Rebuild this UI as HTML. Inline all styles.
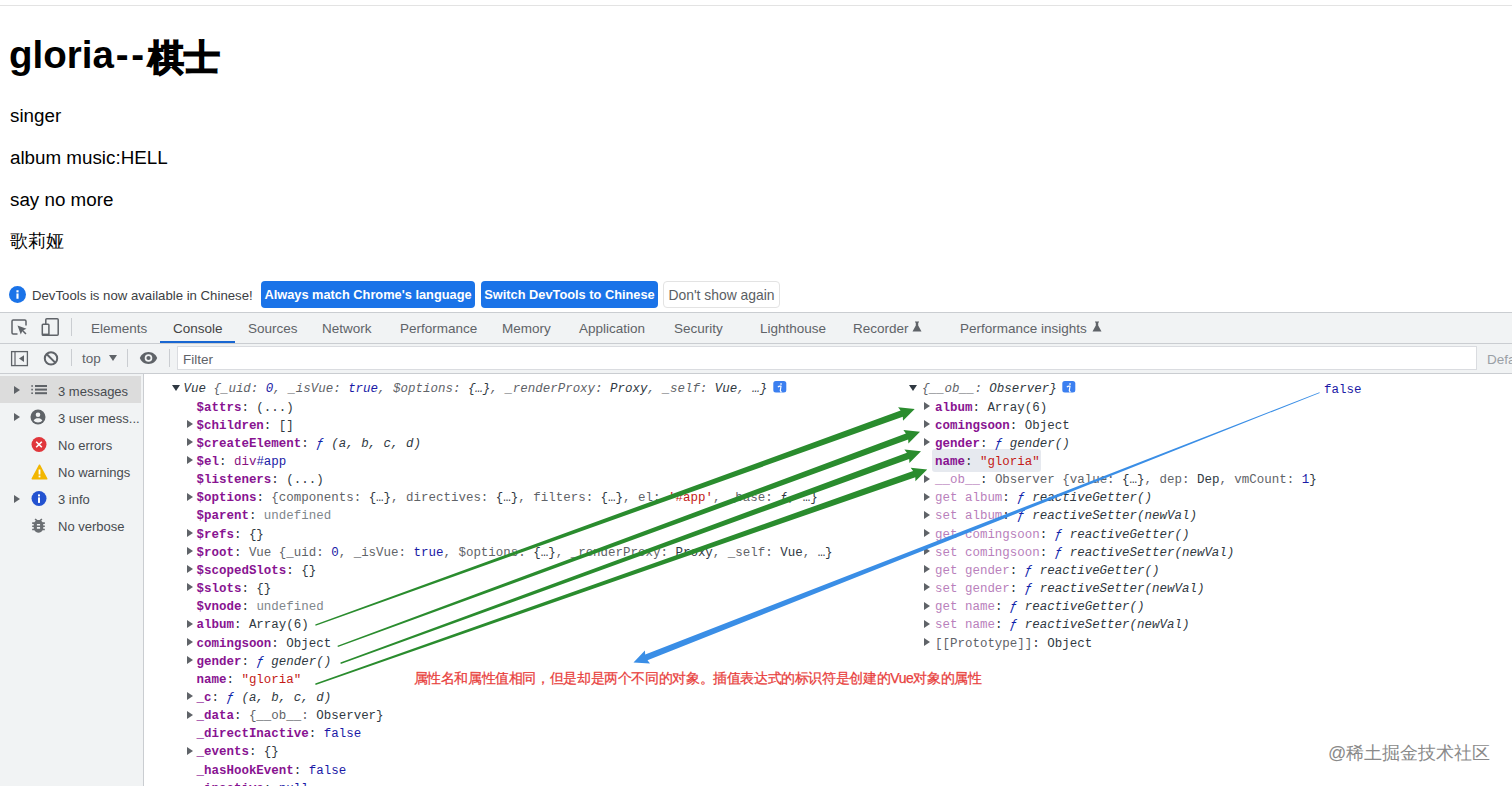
<!DOCTYPE html>
<html><head><meta charset="utf-8">
<style>
*{margin:0;padding:0;box-sizing:border-box}
html,body{width:1512px;height:786px;overflow:hidden;background:#fff;position:relative;font-family:"Liberation Sans",sans-serif}
.a{position:absolute;white-space:nowrap}
#topline{left:0;top:5px;width:1512px;height:1px;background:#e3e3e3}
.pg{color:#000;font-size:18.8px;left:10px}
h1.a{font-size:37px;font-weight:bold;left:9px;color:#000}
/* infobar */
.ib{font-size:13.2px;color:#3c4043}
.btn{position:absolute;top:281px;height:27px;border-radius:4px;font-size:12.8px;line-height:27px;text-align:center;white-space:nowrap}
.bb{background:#1a73e8;color:#fff;font-weight:bold}
.bw{background:#fff;color:#444;border:1px solid #e3e3e3;line-height:25px}
#tabbar{left:0;top:312px;width:1512px;height:32px;background:#f1f3f4;border-top:1px solid #cacdd1;border-bottom:1px solid #cacdd1}
.tab{font-size:13.5px;color:#5f6368;top:320.8px}
#toolbar{left:0;top:344px;width:1512px;height:30px;background:#f1f3f4;border-bottom:1px solid #cacdd1}
#sidebar{left:0;top:374px;width:144px;height:412px;background:#f1f3f4;border-right:1px solid #cacdd1}
.sb{font-size:13px;color:#474b50;left:58px}
.mono{font-family:"Liberation Mono",monospace;font-size:12.47px;line-height:18.15px}
.k{color:#881391;font-weight:bold}
.kd{color:#b97fbc}
.s{color:#c41a16}
.n{color:#1a1aa6}
.g{color:#80868b}
.d{color:#303942}
.it{font-style:italic}
.p{color:#5f6368}
.u{color:#80868b}
.f{color:#0d22aa;font-style:italic}
.tg{color:#881280}
.tri{position:absolute;width:0;height:0;border-top:4px solid transparent;border-bottom:4px solid transparent;border-left:6px solid #5f6368}
.trd{position:absolute;width:0;height:0;border-left:4px solid transparent;border-right:4px solid transparent;border-top:6px solid #303942}
</style></head><body>
<div id="topline" class="a"></div>
<h1 class="a" style="top:33px;font-size:38.5px">gloria<span style="letter-spacing:2.5px;margin-left:2px">--</span></h1>
<div class="a" style="left:148px;top:33.5px;font-size:36px;font-weight:bold;color:#000;-webkit-text-stroke:1.4px #000">棋士</div>
<div class="a pg" style="top:105px">singer</div>
<div class="a pg" style="top:147px">album music:HELL</div>
<div class="a pg" style="top:189px">say no more</div>
<div class="a pg" style="top:229px;font-size:18px">歌莉娅</div>

<!-- infobar -->
<svg class="a" style="left:9px;top:286px" width="17" height="17" viewBox="0 0 16 16"><circle cx="8" cy="8" r="8" fill="#1a73e8"/><rect x="7" y="7" width="2" height="5" fill="#fff"/><rect x="7" y="4" width="2" height="2" fill="#fff"/></svg>
<div class="a ib" style="left:32px;top:287.7px">DevTools is now available in Chinese!</div>
<div class="btn bb" style="left:261px;width:214px">Always match Chrome's language</div>
<div class="btn bb" style="left:481px;width:177px">Switch DevTools to Chinese</div>
<div class="btn bw" style="left:663px;width:117px;font-size:13.9px;line-height:27px;color:#5a5e63">Don't show again</div>

<div id="tabbar" class="a"></div>
<div class="a tab" style="left:91px">Elements</div>
<div class="a tab" style="left:173px;color:#444">Console</div>
<div class="a" style="left:160px;top:341px;width:75px;height:2px;background:#1967d2"></div>
<div class="a tab" style="left:248px">Sources</div>
<div class="a tab" style="left:322px">Network</div>
<div class="a tab" style="left:400px">Performance</div>
<div class="a tab" style="left:502px">Memory</div>
<div class="a tab" style="left:579px">Application</div>
<div class="a tab" style="left:674px">Security</div>
<div class="a tab" style="left:760px">Lighthouse</div>
<div class="a tab" style="left:853px">Recorder</div>
<div class="a tab" style="left:960px">Performance insights</div>

<div id="toolbar" class="a"></div>
<div class="a" style="left:177px;top:346px;width:1300px;height:24px;background:#fff;border:1px solid #dadce0"></div>
<div class="a" style="left:183px;top:352.3px;font-size:13.5px;color:#5f6368">Filter</div>
<div class="a" style="left:1487px;top:352.3px;font-size:13.5px;color:#9aa0a6">Default levels</div>

<div id="sidebar" class="a"></div>

<!-- tab bar icons -->
<svg class="a" style="left:10px;top:318px" width="20" height="20" viewBox="0 0 20 20"><path d="M7.5 16H3.2A1.2 1.2 0 0 1 2 14.8V3.2A1.2 1.2 0 0 1 3.2 2h11.6A1.2 1.2 0 0 1 16 3.2V7.5" fill="none" stroke="#5f6368" stroke-width="1.5"/><path d="M7.5 7.5L16.5 10.8L13.3 12.2L16.5 15.4L15.4 16.5L12.2 13.3L10.8 16.5Z" fill="#5f6368"/></svg>
<svg class="a" style="left:40px;top:317px" width="20" height="20" viewBox="0 0 20 20"><rect x="5.8" y="1.8" width="12.4" height="16.4" rx="1" fill="none" stroke="#5f6368" stroke-width="1.5"/><rect x="2.3" y="7.3" width="6.6" height="10.9" rx="0.8" fill="#f1f3f4" stroke="#5f6368" stroke-width="1.5"/><rect x="2.3" y="16.6" width="6.6" height="1.6" fill="#5f6368"/></svg>
<div class="a" style="left:71px;top:318px;width:1px;height:18px;background:#cacdd1"></div>
<svg class="a" style="left:912px;top:321px" width="10" height="11" viewBox="0 0 10 11"><path d="M3 0.5h4v1h-0.8v3L9.5 10.5h-9L3.8 4.5v-3H3z" fill="#5f6368"/></svg>
<svg class="a" style="left:1092px;top:321px" width="10" height="11" viewBox="0 0 10 11"><path d="M3 0.5h4v1h-0.8v3L9.5 10.5h-9L3.8 4.5v-3H3z" fill="#5f6368"/></svg>
<!-- toolbar icons -->
<svg class="a" style="left:10px;top:350px" width="19" height="17" viewBox="0 0 19 17"><rect x="1.6" y="1.6" width="15.8" height="14" fill="none" stroke="#5f6368" stroke-width="1.3"/><rect x="4.4" y="1.6" width="1.2" height="14" fill="#5f6368"/><path d="M9 8.6L14 5.2V12Z" fill="#5f6368"/></svg>
<svg class="a" style="left:43px;top:350px" width="16" height="16" viewBox="0 0 16 16"><circle cx="8" cy="8.4" r="6.2" fill="none" stroke="#5f6368" stroke-width="2"/><path d="M3.8 4.2L12.2 12.6" stroke="#5f6368" stroke-width="2"/></svg>
<div class="a" style="left:71px;top:349px;width:1px;height:17px;background:#cacdd1"></div>
<div class="a" style="left:82px;top:351.2px;font-size:13.5px;color:#5f6368">top</div>
<div class="trd" style="left:109px;top:355px;border-top-color:#5f6368;border-left-width:4px;border-right-width:4px;border-top-width:6px"></div>
<div class="a" style="left:127px;top:349px;width:1px;height:18px;background:#cacdd1"></div>
<svg class="a" style="left:139px;top:351px" width="19" height="14" viewBox="0 0 19 14"><path d="M9.5 1C5 1 1.9 4 0.8 7C1.9 10 5 13 9.5 13S17.1 10 18.2 7C17.1 4 14 1 9.5 1Z" fill="#5f6368"/><circle cx="9.5" cy="7" r="3.8" fill="#f1f3f4"/><circle cx="9.5" cy="7" r="2.1" fill="#5f6368"/></svg>
<div class="a" style="left:169px;top:349px;width:1px;height:18px;background:#cacdd1"></div>

<!-- sidebar -->
<div class="a" style="left:0;top:376px;width:141px;height:27px;background:#dcdcdc"></div>
<div class="tri" style="left:14px;top:386px;border-left-color:#5f6368"></div>
<svg class="a" style="left:30px;top:384px" width="18" height="11" viewBox="0 0 18 11"><rect x="1.3" y="1.2" width="1.6" height="1.6" fill="#5f6368"/><rect x="1.3" y="4.8" width="1.6" height="1.6" fill="#5f6368"/><rect x="1.3" y="8.4" width="1.6" height="1.6" fill="#5f6368"/><rect x="5" y="1" width="12" height="2" fill="#5f6368"/><rect x="5" y="4.6" width="12" height="2" fill="#5f6368"/><rect x="5" y="8.2" width="12" height="2" fill="#5f6368"/></svg>
<div class="a sb" style="top:383.5px">3 messages</div>
<div class="tri" style="left:14px;top:413px;border-left-color:#5f6368"></div>
<svg class="a" style="left:30px;top:409px" width="16" height="16" viewBox="0 0 16 16"><circle cx="8" cy="8" r="7.5" fill="#5f6368"/><circle cx="8" cy="5.8" r="2.3" fill="#f1f3f4"/><path d="M3.6 11.4C4.6 9.8 6.2 9.2 8 9.2S11.4 9.8 12.4 11.4C11.4 12.7 9.8 13.4 8 13.4S4.6 12.7 3.6 11.4Z" fill="#f1f3f4"/></svg>
<div class="a sb" style="top:410.5px">3 user mess...</div>
<svg class="a" style="left:31px;top:437px" width="16" height="16" viewBox="0 0 16 16"><circle cx="8" cy="7.5" r="7.5" fill="#e0363b"/><path d="M5.2 4.7L10.8 10.3M10.8 4.7L5.2 10.3" stroke="#fff" stroke-width="1.6"/></svg>
<div class="a sb" style="top:437.5px">No errors</div>
<svg class="a" style="left:31px;top:464px" width="17" height="16" viewBox="0 0 17 16"><path d="M8.5 1.2L15.8 14.8H1.2Z" fill="#f2b600" stroke="#f2b600" stroke-width="1.4" stroke-linejoin="round"/><rect x="7.6" y="5.5" width="1.8" height="5" fill="#fff"/><rect x="7.6" y="11.6" width="1.8" height="1.8" fill="#fff"/></svg>
<div class="a sb" style="top:464.5px">No warnings</div>
<div class="tri" style="left:14px;top:495px;border-left-color:#5f6368"></div>
<svg class="a" style="left:31px;top:491px" width="16" height="16" viewBox="0 0 16 16"><circle cx="8" cy="7.5" r="7.5" fill="#2352d0"/><rect x="7" y="6.4" width="2" height="5.5" fill="#fff"/><rect x="7" y="3.4" width="2" height="2" fill="#fff"/></svg>
<div class="a sb" style="top:491.5px">3 info</div>
<svg class="a" style="left:29px;top:516px" width="19" height="19" viewBox="0 0 24 24"><path fill="#6b6f73" d="M20 8h-2.81c-.45-.78-1.07-1.45-1.82-1.96L17 4.41 15.59 3l-2.17 2.17C12.96 5.06 12.49 5 12 5c-.49 0-.96.06-1.41.17L8.41 3 7 4.41l1.62 1.63C7.88 6.550 7.26 7.22 6.81 8H4v2h2.090c-.05.33-.09.66-.09 1v1H4v2h2v1c0 .34.04.67.09 1H4v2h2.81c1.04 1.79 2.970 3 5.19 3s4.15-1.21 5.19-3H20v-2h-2.09c.05-.33.09-.66.09-1v-1h2v-2h-2v-1c0-.34-.04-.67-.09-1H20V8zm-6 8h-4v-2h4v2zm0-4h-4v-2h4v2z"/></svg>
<div class="a sb" style="top:518.5px">No verbose</div>

<!-- info badges -->
<svg class="a" style="left:773px;top:381px" width="14" height="12" viewBox="0 0 14 12"><rect x="0.3" y="0" width="13" height="11.5" rx="2.5" fill="#3b7ff0"/><path d="M7.3 2.2h1.5v1.5H7.3z" fill="#fff"/><path d="M4.9 6.2Q6 4.9 7.3 5.1L8 5.3L7.3 9.6L8.4 11.3" stroke="#fff" stroke-width="1.2" fill="none"/></svg>
<svg class="a" style="left:1062px;top:381px" width="14" height="12" viewBox="0 0 14 12"><rect x="0.3" y="0" width="13" height="11.5" rx="2.5" fill="#3b7ff0"/><path d="M7.3 2.2h1.5v1.5H7.3z" fill="#fff"/><path d="M4.9 6.2Q6 4.9 7.3 5.1L8 5.3L7.3 9.6L8.4 11.3" stroke="#fff" stroke-width="1.2" fill="none"/></svg>
<!-- name highlight -->
<div class="a" style="left:932px;top:449px;width:109px;height:23px;background:#e6e9ef;border-radius:3px"></div>
<div class="a mono" style="left:1324px;top:381px"><span class="n">false</span></div>
<div class="a mono" style="left:183.5px;top:380.43px"><span class="it d">Vue </span><span class="it p">{_uid: </span><span class="it n">0</span><span class="it p">, _isVue: </span><span class="it n">true</span><span class="it p">, $options: </span><span class="it d">{…}</span><span class="it p">, _renderProxy: </span><span class="it d">Proxy</span><span class="it p">, _self: </span><span class="it d">Vue</span><span class="it p">, </span><span class="it d">…}</span></div>
<div class="trd" style="left:172.2px;top:385.00px"></div>
<div class="a mono" style="left:196.5px;top:398.57px"><span class="k">$attrs</span><span class="d">: (...)</span></div>
<div class="a mono" style="left:196.5px;top:416.73px"><span class="k">$children</span><span class="d">: []</span></div>
<div class="tri" style="left:186.5px;top:420.10px"></div>
<div class="a mono" style="left:196.5px;top:434.88px"><span class="k">$createElement</span><span class="d">: </span><span class="f">ƒ</span><span class="it d"> (a, b, c, d)</span></div>
<div class="tri" style="left:186.5px;top:438.25px"></div>
<div class="a mono" style="left:196.5px;top:453.03px"><span class="k">$el</span><span class="d">: </span><span class="tg">div</span><span class="n">#app</span></div>
<div class="tri" style="left:186.5px;top:456.40px"></div>
<div class="a mono" style="left:196.5px;top:471.18px"><span class="k">$listeners</span><span class="d">: (...)</span></div>
<div class="a mono" style="left:196.5px;top:489.32px"><span class="k">$options</span><span class="d">: </span><span class="p">{components: </span><span class="d">{…}</span><span class="p">, directives: </span><span class="d">{…}</span><span class="p">, filters: </span><span class="d">{…}</span><span class="p">, el: </span><span class="s">'#app'</span><span class="p">, _base: </span><span class="d">ƒ, …}</span></div>
<div class="tri" style="left:186.5px;top:492.70px"></div>
<div class="a mono" style="left:196.5px;top:507.47px"><span class="k">$parent</span><span class="d">: </span><span class="u">undefined</span></div>
<div class="a mono" style="left:196.5px;top:525.62px"><span class="k">$refs</span><span class="d">: {}</span></div>
<div class="tri" style="left:186.5px;top:529.00px"></div>
<div class="a mono" style="left:196.5px;top:543.77px"><span class="k">$root</span><span class="d">: </span><span class="p">Vue {_uid: </span><span class="n">0</span><span class="p">, _isVue: </span><span class="n">true</span><span class="p">, $options: </span><span class="d">{…}</span><span class="p">, _renderProxy: </span><span class="d">Proxy</span><span class="p">, _self: </span><span class="d">Vue</span><span class="p">, </span><span class="d">…}</span></div>
<div class="tri" style="left:186.5px;top:547.15px"></div>
<div class="a mono" style="left:196.5px;top:561.92px"><span class="k">$scopedSlots</span><span class="d">: {}</span></div>
<div class="tri" style="left:186.5px;top:565.30px"></div>
<div class="a mono" style="left:196.5px;top:580.07px"><span class="k">$slots</span><span class="d">: {}</span></div>
<div class="tri" style="left:186.5px;top:583.45px"></div>
<div class="a mono" style="left:196.5px;top:598.22px"><span class="k">$vnode</span><span class="d">: </span><span class="u">undefined</span></div>
<div class="a mono" style="left:196.5px;top:616.38px"><span class="k">album</span><span class="d">: Array(6)</span></div>
<div class="tri" style="left:186.5px;top:619.75px"></div>
<div class="a mono" style="left:196.5px;top:634.52px"><span class="k">comingsoon</span><span class="d">: Object</span></div>
<div class="tri" style="left:186.5px;top:637.90px"></div>
<div class="a mono" style="left:196.5px;top:652.67px"><span class="k">gender</span><span class="d">: </span><span class="f">ƒ</span><span class="it d"> gender()</span></div>
<div class="tri" style="left:186.5px;top:656.05px"></div>
<div class="a mono" style="left:196.5px;top:670.82px"><span class="k">name</span><span class="d">: </span><span class="s">"gloria"</span></div>
<div class="a mono" style="left:196.5px;top:688.97px"><span class="k">_c</span><span class="d">: </span><span class="f">ƒ</span><span class="it d"> (a, b, c, d)</span></div>
<div class="tri" style="left:186.5px;top:692.35px"></div>
<div class="a mono" style="left:196.5px;top:707.12px"><span class="k">_data</span><span class="d">: </span><span class="p">{__ob__: </span><span class="d">Observer}</span></div>
<div class="tri" style="left:186.5px;top:710.50px"></div>
<div class="a mono" style="left:196.5px;top:725.27px"><span class="k">_directInactive</span><span class="d">: </span><span class="n">false</span></div>
<div class="a mono" style="left:196.5px;top:743.42px"><span class="k">_events</span><span class="d">: {}</span></div>
<div class="tri" style="left:186.5px;top:746.80px"></div>
<div class="a mono" style="left:196.5px;top:761.57px"><span class="k">_hasHookEvent</span><span class="d">: </span><span class="n">false</span></div>
<div class="a mono" style="left:196.5px;top:779.72px"><span class="k">_inactive</span><span class="d">: </span><span class="n">null</span></div>
<div class="a mono" style="left:922px;top:380.43px"><span class="it p">{__ob__: </span><span class="it d">Observer}</span></div>
<div class="trd" style="left:909.3px;top:385.00px"></div>
<div class="a mono" style="left:935px;top:398.57px"><span class="k">album</span><span class="d">: Array(6)</span></div>
<div class="tri" style="left:924.2px;top:401.95px"></div>
<div class="a mono" style="left:935px;top:416.73px"><span class="k">comingsoon</span><span class="d">: Object</span></div>
<div class="tri" style="left:924.2px;top:420.10px"></div>
<div class="a mono" style="left:935px;top:434.88px"><span class="k">gender</span><span class="d">: </span><span class="f">ƒ</span><span class="it d"> gender()</span></div>
<div class="tri" style="left:924.2px;top:438.25px"></div>
<div class="a mono" style="left:935px;top:453.03px"><span class="k">name</span><span class="d">: </span><span class="s">"gloria"</span></div>
<div class="a mono" style="left:935px;top:471.18px"><span class="kd">__ob__</span><span class="d">: </span><span class="p">Observer {value: </span><span class="d">{…}</span><span class="p">, dep: </span><span class="d">Dep</span><span class="p">, vmCount: </span><span class="n">1</span><span class="d">}</span></div>
<div class="tri" style="left:924.2px;top:474.55px"></div>
<div class="a mono" style="left:935px;top:489.32px"><span class="kd">get album</span><span class="d">: </span><span class="f">ƒ</span><span class="it d"> reactiveGetter()</span></div>
<div class="tri" style="left:924.2px;top:492.70px"></div>
<div class="a mono" style="left:935px;top:507.47px"><span class="kd">set album</span><span class="d">: </span><span class="f">ƒ</span><span class="it d"> reactiveSetter(newVal)</span></div>
<div class="tri" style="left:924.2px;top:510.85px"></div>
<div class="a mono" style="left:935px;top:525.62px"><span class="kd">get comingsoon</span><span class="d">: </span><span class="f">ƒ</span><span class="it d"> reactiveGetter()</span></div>
<div class="tri" style="left:924.2px;top:529.00px"></div>
<div class="a mono" style="left:935px;top:543.77px"><span class="kd">set comingsoon</span><span class="d">: </span><span class="f">ƒ</span><span class="it d"> reactiveSetter(newVal)</span></div>
<div class="tri" style="left:924.2px;top:547.15px"></div>
<div class="a mono" style="left:935px;top:561.92px"><span class="kd">get gender</span><span class="d">: </span><span class="f">ƒ</span><span class="it d"> reactiveGetter()</span></div>
<div class="tri" style="left:924.2px;top:565.30px"></div>
<div class="a mono" style="left:935px;top:580.07px"><span class="kd">set gender</span><span class="d">: </span><span class="f">ƒ</span><span class="it d"> reactiveSetter(newVal)</span></div>
<div class="tri" style="left:924.2px;top:583.45px"></div>
<div class="a mono" style="left:935px;top:598.22px"><span class="kd">get name</span><span class="d">: </span><span class="f">ƒ</span><span class="it d"> reactiveGetter()</span></div>
<div class="tri" style="left:924.2px;top:601.60px"></div>
<div class="a mono" style="left:935px;top:616.38px"><span class="kd">set name</span><span class="d">: </span><span class="f">ƒ</span><span class="it d"> reactiveSetter(newVal)</span></div>
<div class="tri" style="left:924.2px;top:619.75px"></div>
<div class="a mono" style="left:935px;top:634.52px"><span class="p">[[Prototype]]</span><span class="d">: Object</span></div>
<div class="tri" style="left:924.2px;top:637.90px"></div>
<svg class="a" style="left:0;top:0" width="1512" height="786"><polygon fill="#2a8c2e" points="315.6,625.8 902.8,416.7 903.0,420.8 914.7,408.9 898.1,407.2 900.6,410.5 315.2,624.4"/><polygon fill="#2a8c2e" points="337.9,647.1 908.2,439.6 908.4,443.6 920.0,431.7 903.4,430.1 905.9,433.4 337.5,645.7"/><polygon fill="#2a8c2e" points="340.8,663.9 909.2,459.0 909.4,463.1 921.0,451.2 904.4,449.6 906.9,452.8 340.4,662.5"/><polygon fill="#2a8c2e" points="315.6,684.9 915.3,477.2 915.4,481.3 927.2,469.5 910.7,467.7 913.1,471.0 315.2,683.5"/><polygon fill="#3a8ee6" points="1319.5,392.3 645.2,654.4 644.9,650.4 633.5,662.4 650.0,663.4 647.5,660.3 1319.7,392.9"/></svg>
<div class="a" style="left:413.5px;top:669.5px;font-size:14px;letter-spacing:-0.38px;color:#e8403c;-webkit-text-stroke:0.25px #e8403c">属性名和属性值相同，但是却是两个不同的对象。插值表达式的标识符是创建的Vue对象的属性</div>
<div class="a" style="left:1328px;top:741px;font-size:18px;color:#8a8a8a">@稀土掘金技术社区</div>


</body></html>
